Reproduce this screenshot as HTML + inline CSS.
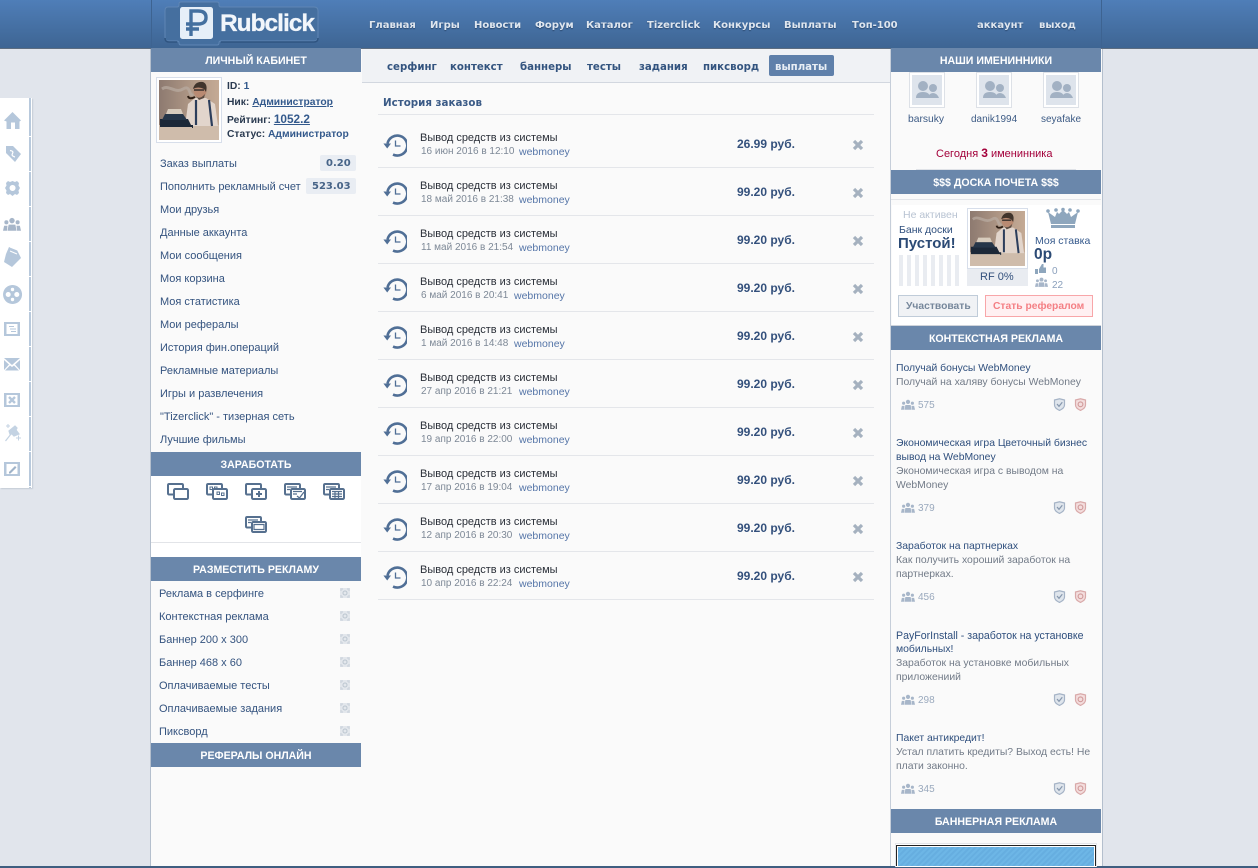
<!DOCTYPE html>
<html lang="ru"><head><meta charset="utf-8"><title>Rubclick</title>
<style>
html,body{margin:0;padding:0}
body{width:1258px;height:868px;overflow:hidden;position:relative;background:#e1e5ec;font:11px/14px "Liberation Sans","DejaVu Sans",sans-serif;color:#2f4f7d}
div,span.t,a,svg.a{position:absolute}
.t{position:absolute;white-space:nowrap;line-height:16px;margin-top:1px}
.b{font-family:"DejaVu Sans","Liberation Sans",sans-serif;font-weight:bold;font-size:10px}
.s{font-family:"Liberation Sans",sans-serif;font-weight:bold;font-size:10.3px}
.h{position:absolute;height:24px;background:#6a87ab;color:#fff;text-align:center;font:bold 10.6px/27px "Liberation Sans",sans-serif}
.n{top:17px;color:#dfe6ef;text-shadow:0 1px 1px #2c4a70}
.tab{top:59px;color:#33547f;font-size:10.2px}
.m{left:160px;color:#34537f;font-size:11px}
.l{left:159px;color:#34537f;font-size:11px}
.r{left:420px;color:#2a2f38;font-size:11px}
.d{left:421px;color:#7d8896;font-size:10px}
.w{color:#5575a8;font-size:10.5px}
.p{color:#33507c;font:bold 12px/16px "Liberation Sans",sans-serif;left:737px;margin-top:0}
.ad{left:896px;color:#2f4f7d;font-size:10.4px}
.ds{left:896px;color:#727b88;font-size:10.4px}
.c{left:918px;color:#9aa9bd;font-size:10px;margin-top:2px}
svg{position:absolute;overflow:visible}
</style></head><body>
<svg width="0" height="0" style="position:absolute">
<defs>
<linearGradient id="pbg" x1="0" y1="0" x2="1" y2="0"><stop offset="0" stop-color="#8d7a70"/><stop offset=".55" stop-color="#b09886"/><stop offset="1" stop-color="#c4aa95"/></linearGradient>
<symbol id="hist" viewBox="0 0 24 24"><path d="M4.5 10.5A10 10 0 1 1 10 21.6" fill="none" stroke="#506f96" stroke-width="2.6"/><path d="M0.4 10.5H8L4.2 15.5Z" fill="#506f96"/><path d="M12.5 7.5V13H17.5" fill="none" stroke="#506f96" stroke-width="1.3"/></symbol>
<symbol id="x" viewBox="0 0 12 12"><path d="M2 2L10 10M10 2L2 10" stroke="#a5b1bf" stroke-width="3.2"/></symbol>
<symbol id="ppl" viewBox="0 0 16 12"><g fill="#a7b6c9"><circle cx="8" cy="3" r="2.4"/><path d="M4 12L5 6.5H11L12 12Z"/><circle cx="3" cy="4.5" r="1.8"/><path d="M0 12L1 7.5H4L3.5 12Z"/><circle cx="13" cy="4.5" r="1.8"/><path d="M16 12L15 7.5H12L12.5 12Z"/></g></symbol>
<symbol id="sh1" viewBox="0 0 12 13"><path d="M1 2L6 .8 11 2V7C11 10 8 11.5 6 12.4 4 11.5 1 10 1 7Z" fill="#dfe5ec" stroke="#a5b3c6" stroke-width="1.2"/><path d="M3.5 6L5.5 8.3 8.8 4.3" fill="none" stroke="#8697ad" stroke-width="1.2"/></symbol>
<symbol id="sh2" viewBox="0 0 12 13"><path d="M1 2L6 .8 11 2V7C11 10 8 11.5 6 12.4 4 11.5 1 10 1 7Z" fill="#f3dddd" stroke="#d9a9a9" stroke-width="1.2"/><circle cx="6" cy="6.3" r="2.4" fill="none" stroke="#d09a9a" stroke-width="1.1"/></symbol>
<symbol id="tg" viewBox="0 0 10 10"><rect x="0" y="0" width="10" height="10" fill="#e3e7ec"/><path d="M1 3V1H3M7 1H9V3M9 7V9H7M3 9H1V7" fill="none" stroke="#cfd6de" stroke-width="1.4"/><circle cx="5" cy="5" r="2" fill="none" stroke="#bcc6d0"/></symbol>
<symbol id="photo" viewBox="0 0 60 60" preserveAspectRatio="none">
<rect width="60" height="60" fill="url(#pbg)"/><rect y="45" width="60" height="15" fill="#cfbcab"/>
<path d="M3 9C10 4 16 14 24 9S30 18 34 14" fill="none" stroke="#b9aca2" stroke-width="3" opacity=".7"/>
<path d="M26 46L29 24 36 18H47L56 24 59 46Z" fill="#e2d5cc"/>
<circle cx="41" cy="11" r="6.500" fill="#b98a72"/><path d="M34 9Q36 1 44 2 49 4 47 12L45 9Q39 6 34 9Z" fill="#40342c"/><path d="M36 15Q40 21 46 14L45 18 40 20Z" fill="#5a4a40"/>
<path d="M35 10H45" stroke="#222" stroke-width="1.300"/><path d="M37 20V45M50 20L53 46" stroke="#2c3e5c" stroke-width="2.200"/><path d="M29 16Q30 20 36 17" fill="none" stroke="#2e1e14" stroke-width="2"/>
<path d="M1 39H29L32 45H34V48H33V47H1Z" fill="#1c2838"/><path d="M6 34H24L28 40H3Z" fill="#263649"/><path d="M7 34L9 29H22L24 34Z" fill="#d8ccbd"/>
</symbol>
<symbol id="e" viewBox="0 0 22 17"><path d="M6.5 11.5H2.2Q1 11.5 1 10.3V2.2Q1 1 2.2 1H14.8Q16 1 16 2.2V5" fill="none" stroke="#56708f" stroke-width="2"/><rect x="7" y="6" width="14" height="10" rx="1.2" fill="#fff" stroke="#56708f" stroke-width="2"/></symbol>
</defs></svg>

<!-- header -->
<div style="left:0;top:0;width:1258px;height:48px;background:linear-gradient(#4f7eb8,#3e6593);border-bottom:1px solid #5d6d80;box-sizing:content-box"></div>
<div style="left:151px;top:0;width:1px;height:48px;background:#3d6391"></div>
<div style="left:1101px;top:0;width:1px;height:48px;background:#3d6391"></div>
<!-- logo -->
<svg style="left:160px;top:0" width="165" height="48">
<path d="M8 7H17Q19 7 19 5V4Q19 2 21 2H57Q59 2 59 4V5Q59 7 61 7H154Q158 7 158 11V37Q158 41 154 41H61Q59 41 59 43Q59 45 57 45H21Q19 45 19 43Q19 41 17 41H8Q5 41 5 37V11Q5 7 8 7Z" fill="#456f9f" stroke="#5f86b4" stroke-width="1"/>
<path d="M5 38Q5 42 9 42H17M61 42H154Q158 42 158 38" fill="none" stroke="#2f5480" stroke-width="1.500"/>
<rect x="20" y="7" width="33" height="32" rx="2.500" fill="#e6eff8"/>
<path d="M31 36V11H38Q46 11 46 17.500T38 24H26M26 29H39" fill="none" stroke="#44709f" stroke-width="3.400"/>
<text x="60" y="31" font-family="Liberation Sans" font-weight="bold" font-size="24.500" fill="#f2f6fb" stroke="#f2f6fb" stroke-width=".3" textLength="95">Rubclick</text>
</svg>
<span class="t b n" style="left:369px">Главная</span>
<span class="t b n" style="left:430px">Игры</span>
<span class="t b n" style="left:474px">Новости</span>
<span class="t b n" style="left:535px">Форум</span>
<span class="t b n" style="left:586px">Каталог</span>
<span class="t b n" style="left:647px">Tizerclick</span>
<span class="t b n" style="left:713px">Конкурсы</span>
<span class="t b n" style="left:784px">Выплаты</span>
<span class="t b n" style="left:852px">Топ-100</span>
<span class="t b n" style="left:977px">аккаунт</span>
<span class="t b n" style="left:1039px">выход</span>

<!-- columns -->
<div style="left:150px;top:49px;width:211px;height:817px;background:#fafafa;border-left:1px solid #b4bfcd;border-right:1px solid #c6ced9"></div>
<div style="left:362px;top:49px;width:528px;height:817px;background:#fafafa"></div>
<div style="left:890px;top:49px;width:211px;height:817px;background:#fafafa;border-left:1px solid #c6ced9;border-right:1px solid #b4bfcd"></div>
<div style="left:0;top:866px;width:1258px;height:2px;background:#3f5e80"></div>

<!-- side toolbar -->
<div style="left:0;top:98px;width:32px;height:390px;background:#fff;box-shadow:1px 1px 1px #c5ccd6"></div>
<div style="left:29px;top:98px;width:2px;height:390px;background:repeating-linear-gradient(#b8c9dc 0 34px,#fff 34px 35px);background-position:0 4px"></div>
<svg style="left:0;top:98px" width="28" height="390" fill="#b5c7db">
<path d="M12.500 14L21 22.500 19.500 23.500V31H15V24.500H11V31H6.500V23.500L4 22.500Z"/>
<path d="M6 48H13L21 56 15 64 6 55Z"/><path d="M10 52.500Q14 53 12.500 55.500T15 59" fill="none" stroke="#fff" stroke-width="1.200"/>
<path d="M12.500 83L15 84 17 83 19 85 18.500 87.500 20 90 18.500 92.500 19 95 17 97 15 96 12.500 98 10 96 8 97 6 95 6.500 92.500 5 90 6.500 87.500 6 85 8 83 10 84ZM12.500 87A3 3 0 1 0 12.600 87Z" fill-rule="evenodd"/>
<use href="#ppl" x="3" y="119" width="18" height="14"/>
<path d="M9 149L17 152 21 160 12 169 4 164 6 156Z"/><path d="M10 149L20 153M10 153L17 156" stroke="#fff" fill="none"/>
<path d="M12.500 187A9.500 9.500 0 1 0 12.600 187Z"/><g fill="#fff"><circle cx="8.200" cy="196.500" r="2.500"/><circle cx="16.800" cy="196.500" r="2.500"/><circle cx="12.500" cy="191.500" r="1.700"/><circle cx="12.500" cy="201.500" r="1.700"/></g>
<path d="M4 224H20V238H4ZM6.500 226V236H17.500V226ZM9 228H14V229H9ZM10 230.500H16V231.500H10ZM11 233H16V234H11Z" fill-rule="evenodd"/>
<path d="M4 260H20L12 267ZM4 262L9 266.500 4 272ZM20 262L15 266.500 20 272ZM5 272.500L10 267.500 12 269 14 267.500 19 272.500Z"/>
<path d="M4 295H20V309H4ZM6.500 297V307H17.500V297Z" fill-rule="evenodd"/><path d="M9 299L15 305M15 299L9 305" stroke="#b5c7db" stroke-width="2.400"/>
<path d="M5.500 343L11 336M9 333L15 328 17 330 16 332 19 336 14 338 12 336 10 336Z" fill="#c4d3e3" stroke="#c4d3e3" stroke-width="1.200"/><path d="M6 328H10M8 326V330M16 340H21M18.500 337.500V342.500" stroke="#c4d3e3"/>
<path d="M4 364H20V378H4ZM6.500 366V376H17.500V366Z" fill-rule="evenodd"/><path d="M9 374L15 368 16.500 369.500 10.500 375.500H9Z" fill="#9fb3c9"/>
</svg>

<!-- left col -->
<div class="h" style="left:151px;top:48px;width:210px">ЛИЧНЫЙ КАБИНЕТ</div>
<div style="left:156px;top:77px;width:64px;height:64px;border:1px solid #d7deea;background:#fff"></div>
<svg style="left:159px;top:80px;filter:blur(.35px)" width="60" height="60"><use href="#photo" width="60" height="60"/></svg>
<span class="t s" style="left:227px;top:78px;color:#2a3a50">ID: <span style="color:#33598c">1</span></span>
<span class="t s" style="left:227px;top:94px;color:#2a3a50">Ник: <u style="color:#33598c">Администратор</u></span>
<span class="t s" style="left:227px;top:110px;color:#2a3a50">Рейтинг: <u style="color:#33598c;font-size:11.800px">1052.2</u></span>
<span class="t s" style="left:227px;top:126px;color:#2a3a50">Статус: <span style="color:#33598c">Администратор</span></span>
<span class="t m" style="top:155px">Заказ выплаты</span>
<div style="left:320px;top:155px;width:36px;height:16px;background:#e9edf3;border-radius:2px"></div>
<span class="t b" style="left:326px;top:155px;color:#476488">0.20</span>
<span class="t m" style="top:178px">Пополнить рекламный счет</span>
<div style="left:306px;top:178px;width:50px;height:16px;background:#e9edf3;border-radius:2px"></div>
<span class="t b" style="left:312px;top:178px;color:#476488">523.03</span>
<span class="t m" style="top:201px">Мои друзья</span>
<span class="t m" style="top:224px">Данные аккаунта</span>
<span class="t m" style="top:247px">Мои сообщения</span>
<span class="t m" style="top:270px">Моя корзина</span>
<span class="t m" style="top:293px">Моя статистика</span>
<span class="t m" style="top:316px">Мои рефералы</span>
<span class="t m" style="top:339px">История фин.операций</span>
<span class="t m" style="top:362px">Рекламные материалы</span>
<span class="t m" style="top:385px">Игры и развлечения</span>
<span class="t m" style="top:408px">"Tizerclick" - тизерная сеть</span>
<span class="t m" style="top:431px">Лучшие фильмы</span>
<div class="h" style="left:151px;top:452px;width:210px">ЗАРАБОТАТЬ</div>
<div style="left:151px;top:476px;width:210px;height:81px;background:#fff"></div>
<div style="left:151px;top:542px;width:210px;height:1px;background:#e2e4e8"></div>
<svg style="left:167px;top:483px" width="22" height="17"><use href="#e" width="22" height="17"/></svg>
<svg style="left:206px;top:483px" width="22" height="17"><use href="#e" width="22" height="17"/><path d="M4 4H6.500V6.500H4ZM8.500 4H11V5.500H8.500ZM11 9H13.500V11.500H11ZM15.500 10H18V12.500H15.500Z" fill="#fff" stroke="#56708f"/></svg>
<svg style="left:245px;top:483px" width="22" height="17"><use href="#e" width="22" height="17"/><path d="M14 8V14M11 11H17" stroke="#56708f" stroke-width="2"/></svg>
<svg style="left:284px;top:483px" width="22" height="17"><use href="#e" width="22" height="17"/><path d="M3 4H13M3 6.500H6M9 8.500H18M9 11H13M13 13L15.500 15 20 9" fill="none" stroke="#56708f" stroke-width="1.300"/></svg>
<svg style="left:323px;top:483px" width="22" height="17"><use href="#e" width="22" height="17"/><path d="M3 4H13M3 6.500H6M9 8.500H19M9 11H19M9 13.500H19M12 8V15M15.500 8V15" fill="none" stroke="#56708f" stroke-width="1.200"/></svg>
<svg style="left:245px;top:516px" width="22" height="17"><use href="#e" width="22" height="17"/><path d="M3 4H13M3 6.500H6M9 8.500H19V13.500H9Z" fill="none" stroke="#56708f" stroke-width="1.200"/></svg>
<div class="h" style="left:151px;top:557px;width:210px">РАЗМЕСТИТЬ РЕКЛАМУ</div>
<span class="t l" style="top:585px">Реклама в серфинге</span>
<span class="t l" style="top:608px">Контекстная реклама</span>
<span class="t l" style="top:631px">Баннер 200 x 300</span>
<span class="t l" style="top:654px">Баннер 468 x 60</span>
<span class="t l" style="top:677px">Оплачиваемые тесты</span>
<span class="t l" style="top:700px">Оплачиваемые задания</span>
<span class="t l" style="top:723px">Пиксворд</span>
<svg style="left:340px;top:588px" width="10" height="150"><use href="#tg" y="0" width="10" height="10"/><use href="#tg" y="23" width="10" height="10"/><use href="#tg" y="46" width="10" height="10"/><use href="#tg" y="69" width="10" height="10"/><use href="#tg" y="92" width="10" height="10"/><use href="#tg" y="115" width="10" height="10"/><use href="#tg" y="138" width="10" height="10"/></svg>
<div class="h" style="left:151px;top:743px;width:210px">РЕФЕРАЛЫ ОНЛАЙН</div>

<!-- center -->
<div style="left:362px;top:49px;width:528px;height:33px;background:#f0f2f5;border-bottom:1px solid #d2d7df"></div>
<span class="t b tab" style="left:387px">серфинг</span>
<span class="t b tab" style="left:450px">контекст</span>
<span class="t b tab" style="left:520px">баннеры</span>
<span class="t b tab" style="left:587px">тесты</span>
<span class="t b tab" style="left:639px">задания</span>
<span class="t b tab" style="left:703px">пиксворд</span>
<div style="left:769px;top:55px;width:65px;height:21px;background:#5f80aa;border-radius:2px"></div>
<span class="t b tab" style="left:775px;color:#e8eef5">выплаты</span>
<span class="t b" style="left:383px;top:94px;color:#3a5a86;font-size:10.300px">История заказов</span>
<div style="left:378px;top:114px;width:496px;height:1px;background:#e4e6ea"></div>

<svg style="left:380px;top:120px" width="500" height="480">
<g transform="translate(2 0)"><use href="#hist" x="1" y="13" width="24" height="24"/><use href="#hist" x="1" y="61" width="24" height="24"/><use href="#hist" x="1" y="109" width="24" height="24"/><use href="#hist" x="1" y="157" width="24" height="24"/><use href="#hist" x="1" y="205" width="24" height="24"/><use href="#hist" x="1" y="253" width="24" height="24"/><use href="#hist" x="1" y="301" width="24" height="24"/><use href="#hist" x="1" y="349" width="24" height="24"/><use href="#hist" x="1" y="397" width="24" height="24"/><use href="#hist" x="1" y="445" width="24" height="24"/></g>
<g><use href="#x" x="472" y="19" width="12" height="12"/><use href="#x" x="472" y="67" width="12" height="12"/><use href="#x" x="472" y="115" width="12" height="12"/><use href="#x" x="472" y="163" width="12" height="12"/><use href="#x" x="472" y="211" width="12" height="12"/><use href="#x" x="472" y="259" width="12" height="12"/><use href="#x" x="472" y="307" width="12" height="12"/><use href="#x" x="472" y="355" width="12" height="12"/><use href="#x" x="472" y="403" width="12" height="12"/><use href="#x" x="472" y="451" width="12" height="12"/></g>
<g fill="#e4e6ea"><rect x="-2" y="47" width="496" height="1"/><rect x="-2" y="95" width="496" height="1"/><rect x="-2" y="143" width="496" height="1"/><rect x="-2" y="191" width="496" height="1"/><rect x="-2" y="239" width="496" height="1"/><rect x="-2" y="287" width="496" height="1"/><rect x="-2" y="335" width="496" height="1"/><rect x="-2" y="383" width="496" height="1"/><rect x="-2" y="431" width="496" height="1"/><rect x="-2" y="479" width="496" height="1"/></g>
</svg>

<span class="t r" style="top:129px">Вывод средств из системы</span><span class="t d" style="top:143px">16 июн 2016 в 12:10</span><span class="t w" style="left:519px;top:143px">webmoney</span><span class="t p" style="top:136px">26.99 руб.</span>
<span class="t r" style="top:177px">Вывод средств из системы</span><span class="t d" style="top:191px">18 май 2016 в 21:38</span><span class="t w" style="left:519px;top:191px">webmoney</span><span class="t p" style="top:184px">99.20 руб.</span>
<span class="t r" style="top:225px">Вывод средств из системы</span><span class="t d" style="top:239px">11 май 2016 в 21:54</span><span class="t w" style="left:519px;top:239px">webmoney</span><span class="t p" style="top:232px">99.20 руб.</span>
<span class="t r" style="top:273px">Вывод средств из системы</span><span class="t d" style="top:287px">6 май 2016 в 20:41</span><span class="t w" style="left:514px;top:287px">webmoney</span><span class="t p" style="top:280px">99.20 руб.</span>
<span class="t r" style="top:321px">Вывод средств из системы</span><span class="t d" style="top:335px">1 май 2016 в 14:48</span><span class="t w" style="left:514px;top:335px">webmoney</span><span class="t p" style="top:328px">99.20 руб.</span>
<span class="t r" style="top:369px">Вывод средств из системы</span><span class="t d" style="top:383px">27 апр 2016 в 21:21</span><span class="t w" style="left:519px;top:383px">webmoney</span><span class="t p" style="top:376px">99.20 руб.</span>
<span class="t r" style="top:417px">Вывод средств из системы</span><span class="t d" style="top:431px">19 апр 2016 в 22:00</span><span class="t w" style="left:519px;top:431px">webmoney</span><span class="t p" style="top:424px">99.20 руб.</span>
<span class="t r" style="top:465px">Вывод средств из системы</span><span class="t d" style="top:479px">17 апр 2016 в 19:04</span><span class="t w" style="left:519px;top:479px">webmoney</span><span class="t p" style="top:472px">99.20 руб.</span>
<span class="t r" style="top:513px">Вывод средств из системы</span><span class="t d" style="top:527px">12 апр 2016 в 20:30</span><span class="t w" style="left:519px;top:527px">webmoney</span><span class="t p" style="top:520px">99.20 руб.</span>
<span class="t r" style="top:561px">Вывод средств из системы</span><span class="t d" style="top:575px">10 апр 2016 в 22:24</span><span class="t w" style="left:519px;top:575px">webmoney</span><span class="t p" style="top:568px">99.20 руб.</span>

<!-- right col -->
<div class="h" style="left:891px;top:48px;width:210px">НАШИ ИМЕНИННИКИ</div>
<svg style="left:909px;top:72px" width="171" height="36">
<g id="av"><rect x=".5" y=".5" width="35" height="35" fill="#fff" stroke="#dde1e7"/><rect x="3" y="3" width="30" height="30" fill="#dee4ec"/><g fill="#a2b1c3"><circle cx="14" cy="14" r="5"/><path d="M7 26Q7 20 14 20T21 26Z"/><circle cx="24" cy="16" r="4"/><path d="M19 26Q20 21 24 21T30 26Z"/></g></g>
<use href="#av" x="67"/><use href="#av" x="134"/>
</svg>
<span class="t" style="left:908px;top:111px;color:#3d5b85;font-size:10.300px">barsuky</span>
<span class="t" style="left:971px;top:111px;color:#3d5b85;font-size:10px">danik1994</span>
<span class="t" style="left:1041px;top:111px;color:#3d5b85;font-size:10px">seyafake</span>
<span class="t" style="left:936px;top:144px;color:#a3003a;font-size:11px">Сегодня <b style="font-size:12px">3</b> именинника</span>
<div style="left:916px;top:169px;width:160px;height:1px;background:#dfe2e7"></div>
<div class="h" style="left:891px;top:170px;width:210px">$$$ ДОСКА ПОЧЕТА $$$</div>
<div style="left:891px;top:199px;width:210px;height:1px;background:#e3e5e9"></div>
<div style="left:892px;top:205px;width:209px;height:120px;background:#fff"></div>
<div style="left:891px;top:325px;width:210px;height:1px;background:#cfd4db"></div>
<span class="t" style="left:903px;top:206px;color:#b8c3d2;font-size:10.500px">Не активен</span>
<span class="t" style="left:899px;top:221px;color:#2f4f7d;font-size:10.500px">Банк доски</span>
<span class="t" style="left:898px;top:235px;color:#2b4a75;font-size:15px;font-weight:bold">Пустой!</span>
<div style="left:899px;top:255px;width:60px;height:31px;background:repeating-linear-gradient(90deg,#e9ecf1 0 4px,#fff 4px 8px)"></div>
<div style="left:967px;top:208px;width:59px;height:59px;border:1px solid #d7deea;background:#fff"></div>
<svg style="left:970px;top:211px;filter:blur(.35px)" width="55" height="55"><use href="#photo" width="55" height="55"/></svg>
<div style="left:967px;top:269px;width:61px;height:17px;background:#e9ecf1"></div>
<span class="t" style="left:980px;top:268px;color:#33507c;font-size:11px">RF 0%</span>
<svg style="left:1046px;top:207px" width="34" height="22" fill="#8ea6bd"><path d="M2 5L9 10 11 5 13 7 17 3 21 7 23 5 25 10 32 5 29 17H5Z"/><circle cx="2" cy="4" r="1.800"/><circle cx="10" cy="3" r="1.800"/><circle cx="17" cy="2.500" r="1.800"/><circle cx="24" cy="3" r="1.800"/><circle cx="32" cy="4" r="1.800"/><rect x="5" y="18" width="24" height="3"/></svg>
<span class="t" style="left:1035px;top:232px;color:#35598c;font-size:10.500px">Моя ставка</span>
<span class="t" style="left:1034px;top:246px;color:#2b4a75;font-size:15.500px;font-weight:bold">0р</span>
<svg style="left:1035px;top:263px" width="14" height="24" fill="#8ea6bd"><path d="M0 6H3V11H0ZM4 6L7 1H8.500V4.500H11V10H4Z"/><use href="#ppl" y="14" width="13" height="10"/></svg>
<span class="t" style="left:1052px;top:263px;color:#8ba0bc;font-size:10px">0</span>
<span class="t" style="left:1052px;top:277px;color:#8ba0bc;font-size:10px">22</span>
<div style="left:898px;top:295px;border:1px solid #c0ccd9;background:#f0f2f5;height:20px;width:78px"></div>
<span class="t s" style="left:906px;top:298px;color:#76879b">Участвовать</span>
<div style="left:985px;top:295px;width:106px;height:20px;border:1px solid #f8a6a9;background:#fff0f2"></div>
<span class="t s" style="left:993px;top:298px;color:#f47f84">Стать рефералом</span>

<div class="h" style="left:891px;top:326px;width:210px">КОНТЕКСТНАЯ РЕКЛАМА</div>
<span class="t ad" style="top:360px">Получай бонусы WebMoney</span>
<span class="t ds" style="top:374px">Получай на халяву бонусы WebMoney</span>
<span class="t c" style="top:396px">575</span>
<span class="t ad" style="top:435px">Экономическая игра Цветочный бизнес</span>
<span class="t ad" style="top:449px">вывод на WebMoney</span>
<span class="t ds" style="top:463px">Экономическая игра с выводом на</span>
<span class="t ds" style="top:477px">WebMoney</span>
<span class="t c" style="top:499px">379</span>
<span class="t ad" style="top:538px">Заработок на партнерках</span>
<span class="t ds" style="top:552px">Как получить хороший заработок на</span>
<span class="t ds" style="top:566px">партнерках.</span>
<span class="t c" style="top:588px">456</span>
<span class="t ad" style="top:627px;font-size:10.600px">PayForInstall - заработок на установке</span>
<span class="t ad" style="top:641px">мобильных!</span>
<span class="t ds" style="top:655px">Заработок на установке мобильных</span>
<span class="t ds" style="top:669px">приложениий</span>
<span class="t c" style="top:691px">298</span>
<span class="t ad" style="top:730px">Пакет антикредит!</span>
<span class="t ds" style="top:744px">Устал платить кредиты? Выход есть! Не</span>
<span class="t ds" style="top:758px">плати законно.</span>
<span class="t c" style="top:780px">345</span>
<svg style="left:901px;top:398px" width="190" height="396">
<g id="st"><use href="#ppl" y="1" width="14" height="11"/><use href="#sh1" x="152" width="13" height="13"/><use href="#sh2" x="173" width="13" height="13"/></g>
<use href="#st" y="103"/><use href="#st" y="192"/><use href="#st" y="295"/><use href="#st" y="384"/>
</svg>
<div class="h" style="left:891px;top:809px;width:210px">БАННЕРНАЯ РЕКЛАМА</div>
<div style="left:895px;top:843px;width:200px;height:23px;border:1px solid #e3e5e9;border-bottom:0;background:#fff"></div>
<div style="left:896px;top:845px;width:200px;height:21px;border:1px solid #222;border-bottom:0;box-sizing:border-box;background:#fff"></div>
<div style="left:898px;top:847px;width:196px;height:19px;background:repeating-linear-gradient(135deg,#6db6e6 0 2px,#66aee0 2px 4px)"></div>
</body></html>
